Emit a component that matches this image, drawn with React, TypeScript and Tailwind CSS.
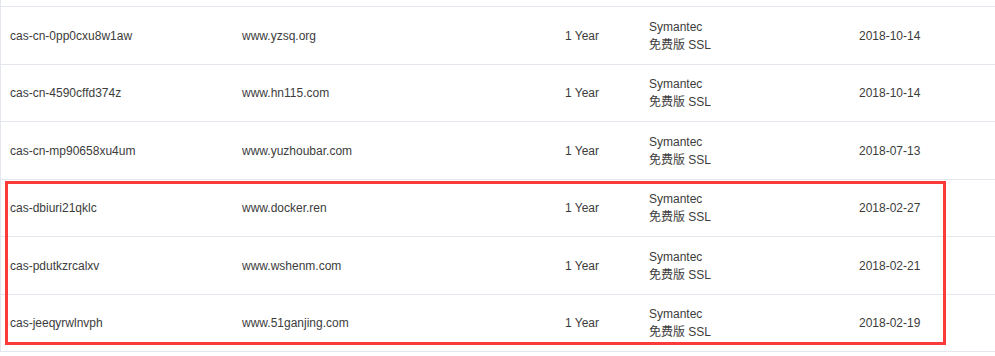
import React from "react";

type Cert = { id: string; domain: string; period: string; date: string };

const certs: Cert[] = [
  { id: "cas-cn-0pp0cxu8w1aw", domain: "www.yzsq.org", period: "1 Year", date: "2018-10-14" },
  { id: "cas-cn-4590cffd374z", domain: "www.hn115.com", period: "1 Year", date: "2018-10-14" },
  { id: "cas-cn-mp90658xu4um", domain: "www.yuzhoubar.com", period: "1 Year", date: "2018-07-13" },
  { id: "cas-dbiuri21qklc", domain: "www.docker.ren", period: "1 Year", date: "2018-02-27" },
  { id: "cas-pdutkzrcalxv", domain: "www.wshenm.com", period: "1 Year", date: "2018-02-21" },
  { id: "cas-jeeqyrwlnvph", domain: "www.51ganjing.com", period: "1 Year", date: "2018-02-19" },
];

const Row = ({ cert, tall }: { cert: Cert; tall: boolean }) => (
  <div
    className={`flex items-center border-b border-[#e4e8ee] pl-[9px] ${tall ? "h-[58px]" : "h-[57px]"}`}
  >
    <div className="w-[232px] shrink-0">{cert.id}</div>
    <div className="w-[323px] shrink-0">{cert.domain}</div>
    <div className="w-[84px] shrink-0">{cert.period}</div>
    <div className="w-[210px] shrink-0 leading-[18px]">
      <div>Symantec</div>
      <div>免费版 SSL</div>
    </div>
    <div>{cert.date}</div>
  </div>
);

export default function App() {
  return (
    <div
      className="relative w-[995px] h-[356px] overflow-hidden bg-white text-[12px] text-[#3c3c3c]"
      style={{ fontFamily: '"Liberation Sans", "Noto Sans CJK SC", sans-serif' }}
    >
      <div className="border-l border-[#e4e8ee]">
        <div className="h-[7px] border-b border-[#e4e8ee]" />
        {certs.map((c, i) => (
          <Row key={c.id} cert={c} tall={i % 2 === 0} />
        ))}
      </div>
      <div className="absolute left-[5px] top-[181px] w-[941px] h-[164px] border-[3px] border-[#fb3a3a]" />
    </div>
  );
}
